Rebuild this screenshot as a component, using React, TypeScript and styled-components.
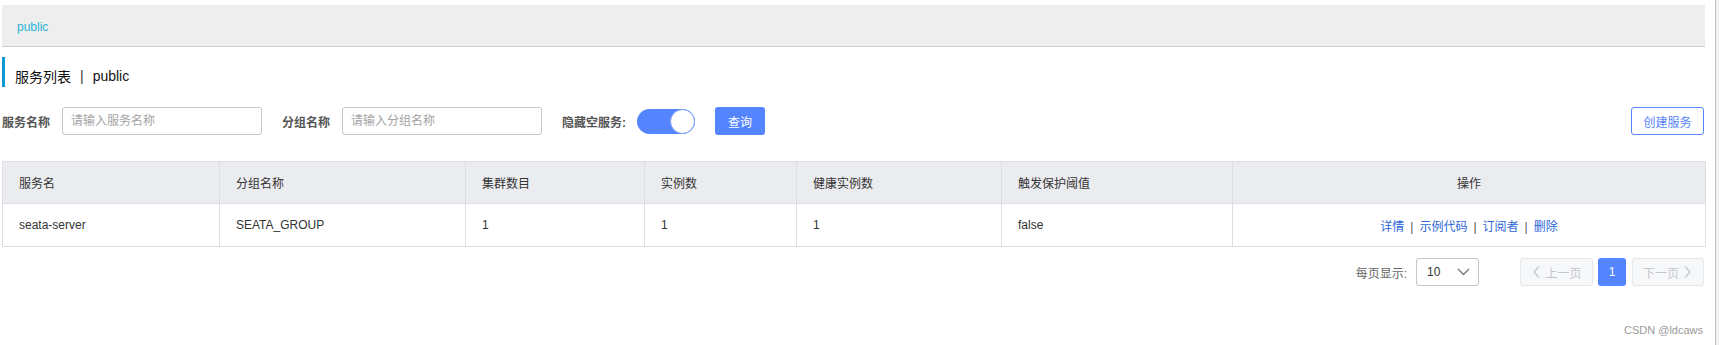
import React from 'react';
import styled, { createGlobalStyle } from 'styled-components';

const GlobalStyle = createGlobalStyle`
  html, body { margin: 0; padding: 0; background: #fff; }
  body {
    font-family: "Liberation Sans", "Noto Sans CJK SC", sans-serif;
    font-size: 12px;
    color: #333;
  }
  * { box-sizing: border-box; }
`;

const Shell = styled.div`
  position: relative;
  display: flex;
  width: 1719px;
  height: 345px;
  overflow: hidden;
`;

const Main = styled.div`
  flex: 1;
  min-width: 0;
  padding: 5px 10px 0 2px;
`;

const ScrollTrack = styled.div`
  width: 4px;
  border-left: 1px solid #c4c4c4;
  background: #f1f1f1;
`;

const Crumb = styled.div`
  height: 42px;
  background: #eeeeee;
  border-bottom: 1px solid #cccccc;
  display: flex;
  align-items: center;
  padding: 3px 0 0 15px;
  color: #29b4d8;
  font-size: 12px;
`;

const TitleBar = styled.div`
  margin-top: 10px;
  height: 30px;
  border-left: 3px solid #0e9ad3;
  padding: 7px 0 0 10px;
  display: flex;
  align-items: center;
  font-size: 14px;
  color: #111;
`;

const TitleSep = styled.span`
  margin: 0 9px;
  color: #333;
`;

const FilterRow = styled.div`
  margin-top: 20px;
  height: 28px;
  display: flex;
  align-items: center;
`;

const FieldLabel = styled.label<{ $gap?: number }>`
  font-weight: bold;
  color: #555;
  font-size: 12px;
  margin-right: ${(p) => p.$gap ?? 12}px;
  white-space: nowrap;
`;

const TextInput = styled.input`
  width: 200px;
  height: 28px;
  border: 1px solid #c4c6cf;
  border-radius: 3px;
  padding: 0 8px;
  font-size: 12px;
  font-family: inherit;
  color: #333;
  margin-right: 20px;
  outline: none;
  &::placeholder { color: #a3a3a3; }
`;

const SwitchTrack = styled.button<{ $on: boolean }>`
  width: 58px;
  height: 25px;
  border-radius: 13px;
  border: none;
  padding: 0;
  display: flex;
  align-items: center;
  justify-content: ${(p) => (p.$on ? 'flex-end' : 'flex-start')};
  background: ${(p) => (p.$on ? '#5584ff' : '#e6e7eb')};
  margin-right: 20px;
  cursor: pointer;
`;

const SwitchKnob = styled.span`
  width: 25px;
  height: 25px;
  border-radius: 50%;
  background: #fff;
  border: 1px solid #7c9ffb;
`;

const PrimaryButton = styled.button`
  width: 50px;
  height: 28px;
  border: none;
  border-radius: 3px;
  background: #5584ff;
  color: #fff;
  font-size: 12px;
  font-family: inherit;
  padding: 0;
  cursor: pointer;
`;

const OutlineButton = styled.button`
  margin-left: auto;
  margin-right: 1px;
  width: 73px;
  height: 28px;
  border: 1px solid #5584ff;
  border-radius: 3px;
  background: #fff;
  color: #5584ff;
  font-size: 12px;
  font-family: inherit;
  padding: 0;
  cursor: pointer;
`;

const Table = styled.table`
  margin-top: 26px;
  width: 1703px;
  border-collapse: collapse;
  table-layout: fixed;
  border: 1px solid #dcdee3;
`;

const Col = styled.col<{ $w: number }>`
  width: ${(p) => p.$w}px;
`;

const Th = styled.th<{ $center?: boolean }>`
  height: 42px;
  background: #ebecf0;
  border: 1px solid #dcdee3;
  padding: 0 16px;
  text-align: ${(p) => (p.$center ? 'center' : 'left')};
  font-weight: normal;
  color: #333;
  font-size: 12px;
`;

const Td = styled.td<{ $center?: boolean }>`
  height: 43px;
  border: 1px solid #dcdee3;
  padding: 0 16px;
  text-align: ${(p) => (p.$center ? 'center' : 'left')};
  color: #333;
  font-size: 12px;
`;

const ActionLink = styled.a`
  color: #2c66d8;
  text-decoration: none;
  cursor: pointer;
`;

const ActionSep = styled.span`
  margin: 0 6px;
  color: #555;
`;

const Pager = styled.div`
  margin-top: 11px;
  height: 28px;
  display: flex;
  align-items: center;
  justify-content: flex-end;
  padding-right: 1px;
`;

const PagerLabel = styled.span`
  color: #666;
  font-size: 12px;
  margin-right: 9px;
`;

const SizeSelect = styled.div`
  width: 63px;
  height: 28px;
  border: 1px solid #c4c6cf;
  border-radius: 3px;
  display: flex;
  align-items: center;
  justify-content: space-between;
  padding: 0 8px 0 10px;
  color: #333;
  font-size: 12px;
  margin-right: 41px;
`;

const PageNav = styled.button<{ $w: number }>`
  width: ${(p) => p.$w}px;
  height: 28px;
  border: 1px solid #e6e7eb;
  border-radius: 3px;
  background: #f7f8fa;
  color: #c4c6cf;
  font-size: 12px;
  font-family: inherit;
  display: flex;
  align-items: center;
  justify-content: center;
  gap: 4px;
  padding: 0;
`;

const PageNum = styled.button`
  width: 28px;
  height: 28px;
  margin: 0 6px 0 5px;
  border: none;
  border-radius: 3px;
  background: #5584ff;
  color: #fff;
  font-size: 12px;
  font-family: inherit;
  padding: 0;
`;

const Watermark = styled.div`
  position: absolute;
  right: 16px;
  top: 324px;
  font-size: 11px;
  color: #9a9a9a;
`;

const Chevron = ({ dir }: { dir: 'left' | 'right' | 'down' }) => {
  const pts =
    dir === 'left' ? '8,1.5 3,7 8,12.5' : dir === 'right' ? '2,1.5 7,7 2,12.5' : '1,4 6.5,9.5 12,4';
  const w = dir === 'down' ? 13 : 10;
  return (
    <svg width={w} height="14" viewBox={`0 0 ${w} 14`} fill="none">
      <polyline points={pts} stroke={dir === 'down' ? '#777' : '#c4c6cf'} strokeWidth="1.3" />
    </svg>
  );
};

const columns = [
  { w: 217, label: '服务名' },
  { w: 246, label: '分组名称' },
  { w: 179, label: '集群数目' },
  { w: 152, label: '实例数' },
  { w: 205, label: '健康实例数' },
  { w: 231, label: '触发保护阈值' },
  { w: 473, label: '操作', center: true },
];

const row = ['seata-server', 'SEATA_GROUP', '1', '1', '1', 'false'];
const actions = ['详情', '示例代码', '订阅者', '删除'];

export default function App() {
  return (
    <Shell>
      <GlobalStyle />
      <Main>
        <Crumb>public</Crumb>
        <TitleBar>
          服务列表<TitleSep>|</TitleSep>public
        </TitleBar>
        <FilterRow>
          <FieldLabel>服务名称</FieldLabel>
          <TextInput placeholder="请输入服务名称" />
          <FieldLabel>分组名称</FieldLabel>
          <TextInput placeholder="请输入分组名称" />
          <FieldLabel $gap={11}>隐藏空服务:</FieldLabel>
          <SwitchTrack $on>
            <SwitchKnob />
          </SwitchTrack>
          <PrimaryButton>查询</PrimaryButton>
          <OutlineButton>创建服务</OutlineButton>
        </FilterRow>
        <Table>
          <colgroup>
            {columns.map((c) => (
              <Col key={c.label} $w={c.w} />
            ))}
          </colgroup>
          <thead>
            <tr>
              {columns.map((c) => (
                <Th key={c.label} $center={c.center}>
                  {c.label}
                </Th>
              ))}
            </tr>
          </thead>
          <tbody>
            <tr>
              {row.map((v, i) => (
                <Td key={i}>{v}</Td>
              ))}
              <Td $center>
                {actions.map((a, i) => (
                  <React.Fragment key={a}>
                    {i > 0 && <ActionSep>|</ActionSep>}
                    <ActionLink>{a}</ActionLink>
                  </React.Fragment>
                ))}
              </Td>
            </tr>
          </tbody>
        </Table>
        <Pager>
          <PagerLabel>每页显示:</PagerLabel>
          <SizeSelect>
            <span>10</span>
            <Chevron dir="down" />
          </SizeSelect>
          <PageNav $w={73}>
            <Chevron dir="left" />
            上一页
          </PageNav>
          <PageNum>1</PageNum>
          <PageNav $w={72}>
            下一页
            <Chevron dir="right" />
          </PageNav>
        </Pager>
      </Main>
      <ScrollTrack />
      <Watermark>CSDN @ldcaws</Watermark>
    </Shell>
  );
}
